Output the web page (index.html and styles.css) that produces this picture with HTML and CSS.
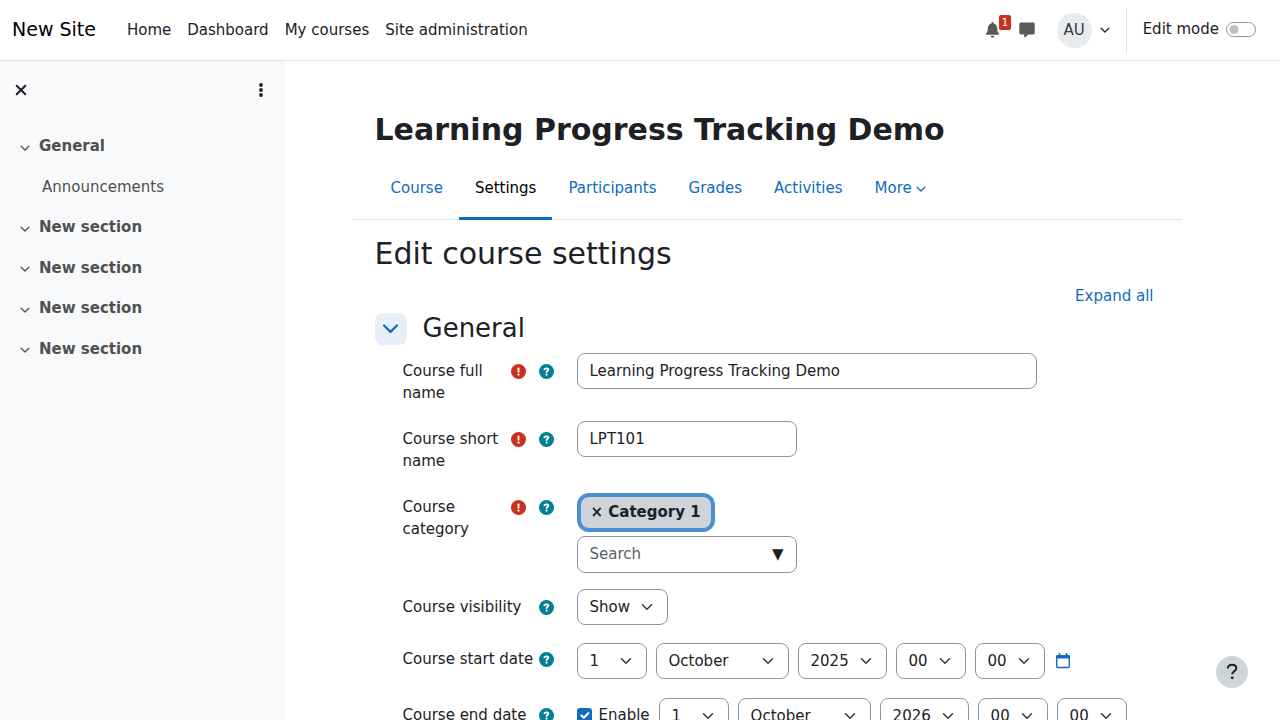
FILE: index.html
```html
<!DOCTYPE html>
<html lang="en">
<head>
<meta charset="utf-8">
<title>Edit course settings</title>
<link rel="stylesheet" href="styles.css">
</head>
<body>
<svg class="defs" aria-hidden="true">
  <symbol id="chevron" viewBox="0 0 10 10"><path d="M1.2 3.2 5 7l3.800-3.800" fill="none" stroke="currentColor" stroke-width="1.300" stroke-linecap="round" stroke-linejoin="round"/></symbol>
  <symbol id="required" viewBox="0 0 16 16"><circle cx="8" cy="8" r="8" fill="#ca3120"/><path d="M8 4.600v3.600" stroke="#fff" stroke-width="2" stroke-linecap="round"/><circle cx="8" cy="11.200" r="1.200" fill="#fff"/></symbol>
  <symbol id="help" viewBox="0 0 16 16"><circle cx="8" cy="8" r="8" fill="#008196"/><path d="M5.800 5.500C6.300 4.700 7 4.600 8 4.600c1.200 0 2 .5 2 1.400C10 7.200 8.100 7.200 8.100 8.500" fill="none" stroke="#fff" stroke-width="2" stroke-linecap="round"/><circle cx="8.100" cy="11.300" r="1.200" fill="#fff"/></symbol>
</svg>

<header class="topbar">
  <a class="brand" href="#">New Site</a>
  <nav class="primary-nav" aria-label="Site">
    <a href="#">Home</a><a href="#">Dashboard</a><a href="#">My courses</a><a href="#">Site administration</a>
  </nav>
  <div class="tools">
    <button class="icon-button bell" aria-label="Notifications">
      <svg width="15" height="16" viewBox="0 0 15 16" fill="#5a5a5a"><path d="M7.500 0c.6 0 1 .4 1 1v.6c2.200.5 3.700 2.300 3.700 4.600 0 3 .7 4.100 1.600 5.100.6.700.2 1.500-.6 1.500H1.800c-.8 0-1.200-.8-.6-1.500.9-1 1.600-2.100 1.600-5.100 0-2.300 1.500-4.100 3.700-4.600V1c0-.6.4-1 1-1zM5.600 13.800h3.800c0 1-.8 1.900-1.900 1.900s-1.900-.9-1.900-1.900z"/></svg>
      <span class="count">1</span>
    </button>
    <button class="icon-button" aria-label="Messages">
      <svg width="16" height="16" viewBox="0 0 16 16" fill="#5a5a5a"><path d="M2 .5h12c1 0 1.700.7 1.700 1.700v8.600c0 1-.7 1.700-1.700 1.700H9.600l-3.700 2.900c-.4.300-.7.100-.7-.3v-2.600H2c-1 0-1.700-.7-1.700-1.700V2.200C.3 1.200 1 .5 2 .5z"/></svg>
    </button>
    <button class="user-menu" aria-label="User menu"><span class="avatar">AU</span><svg class="chev"><use href="#chevron"/></svg></button>
    <div class="edit-mode"><label for="edit">Edit mode</label><input class="switch" id="edit" type="checkbox" role="switch"></div>
  </div>
</header>

<div class="page">
  <aside class="drawer">
    <div class="drawer-head">
      <button class="icon-button" aria-label="Close course index"><svg width="12" height="12" viewBox="0 0 12 12"><path d="m1.700 1.700 8.600 8.600m0-8.600-8.600 8.600" stroke="#1d2125" stroke-width="2" stroke-linecap="round"/></svg></button>
      <button class="icon-button" aria-label="Course index options"><svg width="6" height="16" viewBox="0 0 6 16" fill="#1d2125"><circle cx="3" cy="3" r="1.900"/><circle cx="3" cy="8" r="1.900"/><circle cx="3" cy="13" r="1.900"/></svg></button>
    </div>
    <nav class="index" aria-label="Course index">
      <a class="section" href="#"><svg class="chev"><use href="#chevron"/></svg>General</a>
      <a class="activity" href="#">Announcements</a>
      <a class="section" href="#"><svg class="chev"><use href="#chevron"/></svg>New section</a>
      <a class="section" href="#"><svg class="chev"><use href="#chevron"/></svg>New section</a>
      <a class="section" href="#"><svg class="chev"><use href="#chevron"/></svg>New section</a>
      <a class="section" href="#"><svg class="chev"><use href="#chevron"/></svg>New section</a>
    </nav>
  </aside>

  <main class="main">
    <div class="content">
      <h1>Learning Progress Tracking Demo</h1>
      <nav class="tabs" aria-label="Course">
        <a href="#">Course</a><a class="active" href="#" aria-current="page">Settings</a><a href="#">Participants</a><a href="#">Grades</a><a href="#">Activities</a><a href="#">More<svg class="chev"><use href="#chevron"/></svg></a>
      </nav>
      <form class="settings">
        <h2>Edit course settings</h2>
        <a class="expand" href="#">Expand all</a>
        <div class="group-head">
          <button type="button" class="collapse" aria-label="Collapse General"><svg width="17" height="17"><use href="#chevron"/></svg></button>
          <h3>General</h3>
        </div>
        <div class="rows">
          <div class="row">
            <div class="caption"><label for="fullname">Course full name</label><span class="marks"><svg><use href="#required"/></svg><svg><use href="#help"/></svg></span></div>
            <input class="field wide" id="fullname" type="text" value="Learning Progress Tracking Demo">
          </div>
          <div class="row">
            <div class="caption"><label for="shortname">Course short name</label><span class="marks"><svg><use href="#required"/></svg><svg><use href="#help"/></svg></span></div>
            <input class="field medium" id="shortname" type="text" value="LPT101">
          </div>
          <div class="row">
            <div class="caption"><label for="category">Course category</label><span class="marks"><svg><use href="#required"/></svg><svg><use href="#help"/></svg></span></div>
            <div class="picker">
              <button type="button" class="tag">× Category 1</button>
              <div class="combo"><input id="category" type="text" placeholder="Search"><span class="arrow">▼</span></div>
            </div>
          </div>
          <div class="row">
            <div class="caption"><label for="visible">Course visibility</label><span class="marks"><svg><use href="#help"/></svg></span></div>
            <select class="field show" id="visible"><option>Show</option></select>
          </div>
          <div class="row">
            <div class="caption"><label for="start">Course start date</label><span class="marks"><svg><use href="#help"/></svg></span></div>
            <div class="date">
              <select class="field small" id="start"><option>1</option></select>
              <select class="field month" aria-label="Start month"><option>October</option></select>
              <select class="field year" aria-label="Start year"><option>2025</option></select>
              <select class="field small" aria-label="Start hour"><option>00</option></select>
              <select class="field small" aria-label="Start minute"><option>00</option></select>
              <button type="button" class="icon-button" aria-label="Calendar"><svg width="18" height="16" viewBox="0 0 18 16"><path d="M5.500 0v3m7-3v3" stroke="#0f6cbf" stroke-width="1.600"/><path d="M2 5.500V3.500C2 2.700 2.700 2 3.500 2h11c.8 0 1.500.7 1.500 1.500v2z" fill="#0f6cbf"/><rect x="2.700" y="3" width="12.600" height="11.500" rx="1" fill="none" stroke="#0f6cbf" stroke-width="1.400"/></svg></button>
            </div>
          </div>
          <div class="row">
            <div class="caption"><label for="end">Course end date</label><span class="marks"><svg><use href="#help"/></svg></span></div>
            <div class="date optional">
              <label class="enable"><input class="check" type="checkbox" checked>Enable</label>
              <select class="field small" id="end"><option>1</option></select>
              <select class="field month" aria-label="End month"><option>October</option></select>
              <select class="field year" aria-label="End year"><option>2026</option></select>
              <select class="field small" aria-label="End hour"><option>00</option></select>
              <select class="field small" aria-label="End minute"><option>00</option></select>
            </div>
          </div>
        </div>
      </form>
    </div>
  </main>
</div>
<button class="page-help" aria-label="Help"><svg width="16" height="20" viewBox="0 0 16 20"><path d="M3.800 6.500C3.800 4 5.500 2.800 8 2.800s4.300 1.300 4.300 3.500c0 3.200-4.100 3-4.100 6" fill="none" stroke="#1d2125" stroke-width="2"/><circle cx="8.200" cy="15.800" r="1.400" fill="#1d2125"/></svg></button>
</body>
</html>
```
FILE: styles.css
```css
*, *::before, *::after { box-sizing: border-box; }

body {
  margin: 0;
  height: 100vh;
  display: flex;
  flex-direction: column;
  overflow: hidden;
  background: #fff;
  color: #1d2125;
  font: 15px/1.5 "DejaVu Sans", sans-serif;
}

a { color: #0f6cbf; text-decoration: none; }
h1, h2, h3 { margin: 0; font-weight: 400; line-height: 36px; }
h1, h2 { font-size: 30px; }
h1 { font-weight: 700; }
h3 { font-size: 26px; line-height: 32px; padding-bottom: 2px; }
button { padding: 0; border: 0; background: none; color: inherit; font: inherit; }
svg { display: block; flex: none; }

.defs { position: absolute; width: 0; height: 0; }
.chev { width: 10px; height: 10px; }
.icon-button { display: flex; align-items: center; justify-content: center; }

/* Top bar */
.topbar {
  flex: none;
  display: flex;
  align-items: center;
  height: 61px;
  padding: 0 24px 0 12px;
  border-bottom: 1px solid #dee2e6;
}
.brand { margin-right: 31px; padding-bottom: 2px; color: #000; font-size: 19px; }
.primary-nav { display: flex; gap: 16px; }
.primary-nav a { color: #1d2125; }
.tools { display: flex; align-items: center; margin-left: auto; }
.bell { position: relative; margin-right: 19px; }
.count {
  position: absolute;
  left: 14px;
  top: -7px;
  padding: 0 3px;
  border-radius: 2px;
  background: #ca3120;
  color: #fff;
  font-size: 10px;
}
.user-menu { display: flex; align-items: center; gap: 8px; margin: 0 16px 0 22px; }
.avatar {
  width: 35px;
  height: 35px;
  border-radius: 50%;
  background: #e9ecef;
  color: #343a40;
  line-height: 35px;
  text-align: center;
}
.edit-mode {
  display: flex;
  align-items: center;
  gap: 7px;
  height: 45px;
  padding: 0 0 2px 16px;
  border-left: 1px solid #dee2e6;
}
.switch {
  appearance: none;
  width: 30px;
  height: 15px;
  margin: 0;
  border: 1px solid #8f959e;
  border-radius: 8px;
  background: radial-gradient(circle at 7px 50%, #bfbfbf 4px, transparent 5px);
}

/* Course index */
.page { flex: 1; display: flex; min-height: 0; }
.drawer { flex: none; width: 285px; background: #f8f9fa; }
.drawer-head { display: flex; justify-content: space-between; height: 58px; padding: 0 21px 0 15px; }
.index { display: flex; flex-direction: column; padding: 7px 20px; }
.index a { padding: 9px 0; color: #505050; }
.index .section { display: flex; align-items: center; gap: 9px; font-weight: 700; }
.index .section .chev { margin-top: 3px; }
.index .activity { padding-left: 22px; }

/* Course page */
.main { flex: 1; min-width: 0; padding: 51px 32px 32px 0; overflow-y: auto; scrollbar-width: none; }
.content { max-width: 830px; margin: 0 auto; }
h1 { padding-left: 23px; }
.tabs { display: flex; margin-top: 8px; padding-left: 23px; border-bottom: 1px solid #dee2e6; }
.tabs a {
  display: flex;
  align-items: center;
  gap: 4px;
  height: 64px;
  margin-bottom: -1px;
  padding: 3px 16px 0;
  border-bottom: 3px solid transparent;
}
.tabs .active { border-color: #0f6cbf; color: #000; }
.tabs .chev { margin-top: 2px; }

.settings { display: flex; flex-direction: column; padding: 16px 28px 0 23px; }
.expand { align-self: flex-end; margin-top: 13px; }
.group-head { display: flex; align-items: center; gap: 16px; margin-top: 4px; }
.collapse {
  display: grid;
  place-items: center;
  width: 32px;
  height: 32px;
  border-radius: 8px;
  background: #e7f0f9;
  color: #0f6cbf;
}

.rows { display: flex; flex-direction: column; gap: 16px; padding: 7px 0 0 28px; }
.row { display: grid; grid-template-columns: 151px 1fr; gap: 23px; align-items: start; }
.caption { display: flex; justify-content: space-between; padding-top: 7px; line-height: 22px; }
.marks { display: flex; gap: 13px; padding-top: 4px; }
.marks svg { width: 15px; height: 15px; }
.row:nth-child(-n+2) { min-height: 52px; }

.field, .combo {
  height: 36px;
  padding: 0 12px;
  border: 1px solid #8f959e;
  border-radius: 8px;
  background: #fff;
  color: #1d2125;
  font: inherit;
}
select.field {
  appearance: none;
  padding: 2px 0 0 12px;
  background: #fff url("data:image/svg+xml,%3Csvg xmlns='http://www.w3.org/2000/svg' viewBox='0 0 16 16'%3E%3Cpath fill='none' stroke='%23343a40' stroke-linecap='round' stroke-linejoin='round' stroke-width='2' d='m2 5 6 6 6-6'/%3E%3C/svg%3E") no-repeat right 12px center / 16px 12px;
}
.wide { width: 100%; max-width: 460px; }
.medium, .combo { width: 220px; }
.show { width: 91px; }
.small { width: 70px; }
.month { width: 133px; }
.year { width: 89px; }

.picker { display: flex; flex-direction: column; align-items: flex-start; gap: 4px; padding-top: 4px; }
.tag {
  height: 39px;
  padding: 0 10px;
  border: 4px solid #4a90d2;
  border-radius: 12px;
  background: #ced4da;
  font-weight: 700;
}
.combo { display: flex; align-items: center; height: 37px; }
.combo input { flex: 1; min-width: 0; padding: 0; border: 0; outline: 0; background: none; color: inherit; font: inherit; }
.combo input::placeholder { color: #5a5f64; opacity: 1; }

.date { display: flex; align-items: center; gap: 9px; padding: 2px 0; }
.optional { padding-top: 1px; }
.enable { display: flex; align-items: center; gap: 7px; }
.check {
  appearance: none;
  width: 15px;
  height: 15px;
  margin: 0;
  border-radius: 3px;
  background: #0f6cbf url("data:image/svg+xml,%3Csvg xmlns='http://www.w3.org/2000/svg' viewBox='0 0 20 20'%3E%3Cpath fill='none' stroke='%23fff' stroke-linecap='round' stroke-linejoin='round' stroke-width='3' d='m6 10 3 3 6-6'/%3E%3C/svg%3E") center / contain no-repeat;
}

.page-help {
  position: fixed;
  right: 32px;
  bottom: 32px;
  display: grid;
  place-items: center;
  width: 32px;
  height: 32px;
  border-radius: 50%;
  background: #ced4da;
}
```
